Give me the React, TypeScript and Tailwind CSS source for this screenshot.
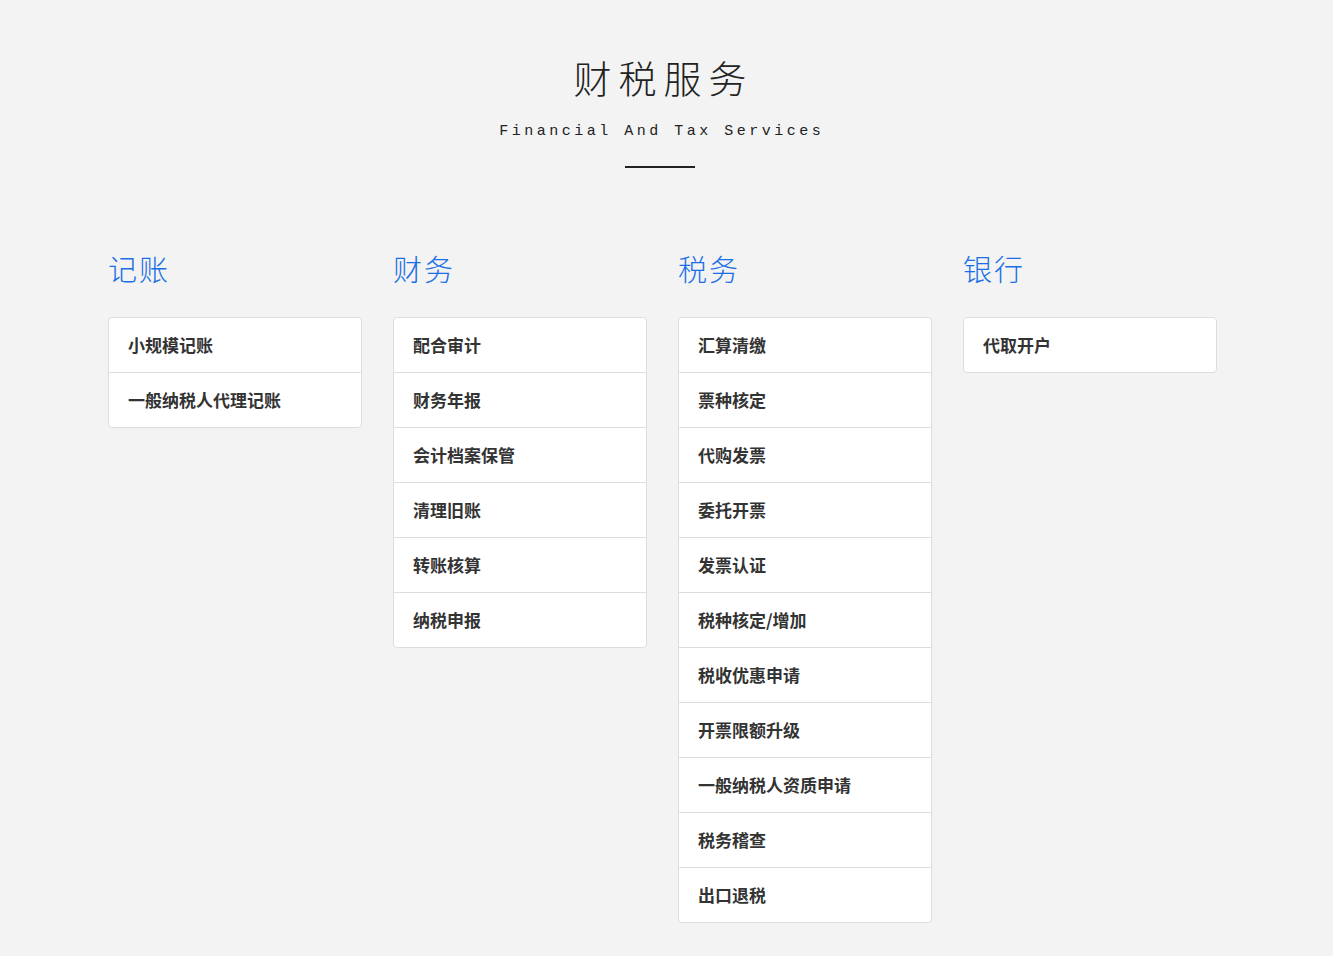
import React from "react";

const columns: { title: string; items: string[] }[] = [
  { title: "记账", items: ["小规模记账", "一般纳税人代理记账"] },
  { title: "财务", items: ["配合审计", "财务年报", "会计档案保管", "清理旧账", "转账核算", "纳税申报"] },
  {
    title: "税务",
    items: [
      "汇算清缴",
      "票种核定",
      "代购发票",
      "委托开票",
      "发票认证",
      "税种核定/增加",
      "税收优惠申请",
      "开票限额升级",
      "一般纳税人资质申请",
      "税务稽查",
      "出口退税",
    ],
  },
  { title: "银行", items: ["代取开户"] },
];

export default function App() {
  return (
    <div className="min-h-[956px] w-full bg-[#f3f3f3] font-['Noto_Sans_CJK_SC',sans-serif]">
      <div className="w-[1320px] pt-[51px] flex flex-col items-center">
        <h1 className="text-[38px] leading-[52px] tracking-[7px] pl-[7px] text-[#222] font-light font-['Noto_Sans_CJK_SC',serif]">
          财税服务
        </h1>
        <p className="mt-[19px] text-[15px] leading-[20px] tracking-[3.5px] pl-[3.5px] text-[#222] font-['Liberation_Mono',monospace]">
          Financial And Tax Services
        </p>
        <div className="mt-[24px] h-[2px] w-[70px] bg-[#222]" />
      </div>
      <div className="pl-[108px] pt-[80px] pb-[34px] flex gap-[31px]">
        {columns.map((col) => (
          <div key={col.title} className="w-[254px] flex flex-col">
            <h2 className="text-[29px] leading-[40px] tracking-[2px] text-[#1a6fe6] font-light">
              {col.title}
            </h2>
            <div className="mt-[29px] bg-white border border-[#dddddd] rounded-[4px] overflow-hidden">
              {col.items.map((it, i) => (
                <div
                  key={it}
                  className={`${i === 0 ? "h-[54px]" : "h-[55px] border-t border-[#dddddd]"} flex items-center pl-[19px] text-[17px] font-bold text-[#333]`}
                >
                  {it}
                </div>
              ))}
            </div>
          </div>
        ))}
      </div>
    </div>
  );
}
